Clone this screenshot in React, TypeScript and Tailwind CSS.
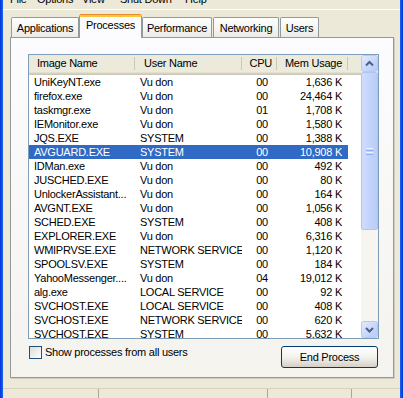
const rows: [string, string, string, string][] = [
  ["UniKeyNT.exe", "Vu don", "00", "1,636 K"],
  ["firefox.exe", "Vu don", "00", "24,464 K"],
  ["taskmgr.exe", "Vu don", "01", "1,708 K"],
  ["IEMonitor.exe", "Vu don", "00", "1,580 K"],
  ["JQS.EXE", "SYSTEM", "00", "1,388 K"],
  ["AVGUARD.EXE", "SYSTEM", "00", "10,908 K"],
  ["IDMan.exe", "Vu don", "00", "492 K"],
  ["JUSCHED.EXE", "Vu don", "00", "80 K"],
  ["UnlockerAssistant...", "Vu don", "00", "164 K"],
  ["AVGNT.EXE", "Vu don", "00", "1,056 K"],
  ["SCHED.EXE", "SYSTEM", "00", "408 K"],
  ["EXPLORER.EXE", "Vu don", "00", "6,316 K"],
  ["WMIPRVSE.EXE", "NETWORK SERVICE", "00", "1,120 K"],
  ["SPOOLSV.EXE", "SYSTEM", "00", "184 K"],
  ["YahooMessenger....", "Vu don", "04", "19,012 K"],
  ["alg.exe", "LOCAL SERVICE", "00", "92 K"],
  ["SVCHOST.EXE", "LOCAL SERVICE", "00", "408 K"],
  ["SVCHOST.EXE", "NETWORK SERVICE", "00", "620 K"],
  ["SVCHOST.EXE", "SYSTEM", "00", "5,632 K"],
];

const selectedRow = 5;

const menu = [
  { label: "File", w: "w-[27px]" },
  { label: "Options", w: "w-[45px]" },
  { label: "View", w: "w-[38px]" },
  { label: "Shut Down", w: "w-[65px]" },
  { label: "Help", w: "w-[40px]" },
];

function Sep() {
  return <div className="h-[13px] w-px shrink-0 self-center bg-[#CBC7B8]" />;
}

function ScrollButton({ up }: { up?: boolean }) {
  return (
    <svg width="17" height="17" viewBox="0 0 17 17" className="block">
      <defs>
        <linearGradient id={up ? "sbu" : "sbd"} x1="0" y1="0" x2="1" y2="1">
          <stop offset="0" stopColor="#E3EBFE" />
          <stop offset="1" stopColor="#B4C8F6" />
        </linearGradient>
      </defs>
      <rect x="0.5" y="0.5" width="16" height="16" rx="2" fill={`url(#${up ? "sbu" : "sbd"})`} stroke="#B8C9F1" />
      <polyline
        points={up ? "5,10.5 8.5,7 12,10.5" : "5,7 8.5,10.5 12,7"}
        fill="none"
        stroke="#4D6185"
        strokeWidth="2"
      />
    </svg>
  );
}

function Tab({ label, w, selected }: { label: string; w: string; selected?: boolean }) {
  if (selected) {
    return (
      <div className={`relative z-10 -mb-px flex h-[24px] ${w} flex-col rounded-t-[3px] border-x border-[#919B9C] bg-[#FCFCFE]`}>
        <div className="h-px rounded-t-[3px] bg-[#E68B2C]" />
        <div className="h-[2px] bg-[#FFC73C]" />
        <div className="flex flex-1 items-start justify-center pt-[2px]">{label}</div>
      </div>
    );
  }
  return (
    <div
      className={`flex h-[20px] ${w} items-center justify-center rounded-t-[2px] border-x border-t border-[#919B9C] bg-gradient-to-b from-[#FFFFFF] to-[#ECEBE6] pt-px`}
    >
      {label}
    </div>
  );
}

export default function App() {
  return (
    <div className="flex h-[398px] w-[403px] overflow-hidden bg-[#ECE9D8] font-['Liberation_Sans',Arial,sans-serif] text-[11px] leading-[13px] tracking-[-0.25px] text-black">
      <div className="w-[3px] shrink-0 bg-gradient-to-r from-[#0831D9] to-[#1C65EB]" />

      <div className="flex w-[397px] flex-col">
        {/* menu bar, scrolled off the top */}
        <div className="h-[10px] shrink-0 border-b border-white pl-[7px]">
          <div className="-mt-[7px] flex">
            {menu.map((m) => (
              <span key={m.label} className={`${m.w} shrink-0`}>
                {m.label}
              </span>
            ))}
          </div>
        </div>

        {/* tabs */}
        <div className="mt-[4px] flex h-[23px] items-end pl-[8px]">
          <Tab label="Applications" w="w-[68px]" />
          <Tab label="Processes" w="w-[63px]" selected />
          <Tab label="Performance" w="w-[70px]" />
          <div className="w-px" />
          <Tab label="Networking" w="w-[66px]" />
          <div className="w-px" />
          <Tab label="Users" w="w-[39px]" />
        </div>

        {/* tab page */}
        <div className="ml-[7px] h-[345px] w-[384px] border border-[#919B9C] bg-gradient-to-b from-[#FCFCFE] to-[#F4F3EE] shadow-[1px_1px_0_#D0CEBF]">
          <div className="ml-[17px] mt-[16px] w-[351px]">
            <div className="flex h-[285px] border border-[#7F9DB9] bg-white">
              <div className="w-[332px] overflow-hidden">
                <div className="flex h-[20px] bg-[linear-gradient(to_bottom,#EBEADB_0,#EBEADB_17px,#E2DECD_17px,#E2DECD_18px,#D6D2C2_18px,#D6D2C2_19px,#CBC7B8_19px)] pb-[3px]">
                  <div className="flex w-[106px] shrink-0">
                    <div className="flex-1 pl-[8px] self-center">Image Name</div>
                    <Sep />
                  </div>
                  <div className="flex w-[107px] shrink-0">
                    <div className="flex-1 pl-[9px] self-center">User Name</div>
                    <Sep />
                  </div>
                  <div className="flex w-[35px] shrink-0">
                    <div className="flex-1 pr-[4px] text-right self-center">CPU</div>
                    <Sep />
                  </div>
                  <div className="flex w-[71px] shrink-0">
                    <div className="flex-1 pr-[5px] text-right self-center">Mem Usage</div>
                    <Sep />
                  </div>
                </div>
                {rows.map((r, i) => (
                  <div
                    key={i}
                    className={`flex h-[14px] w-[319px] items-center whitespace-nowrap ${
                      i === selectedRow ? "bg-[#316AC5] text-white" : ""
                    }`}
                  >
                    <div className="w-[106px] shrink-0 overflow-hidden pl-[5px]">{r[0]}</div>
                    <div className="w-[107px] shrink-0 overflow-hidden pl-[5px]">{r[1]}</div>
                    <div className="w-[35px] shrink-0 pr-[9px] text-right">{r[2]}</div>
                    <div className="w-[71px] shrink-0 pr-[6px] text-right">{r[3]}</div>
                  </div>
                ))}
              </div>

              {/* vertical scrollbar */}
              <div className="flex w-[17px] shrink-0 flex-col bg-[#F6F5F0]">
                <ScrollButton up />
                <div className="flex h-[158px] flex-col items-center justify-center gap-[1px] rounded-[2px] border border-[#B1C5F4] bg-gradient-to-r from-[#CFDCFD] to-[#B9CCF8]">
                  <div className="h-px w-[7px] bg-[#EEF3FE]" />
                  <div className="h-px w-[7px] bg-[#8CB0F8]" />
                  <div className="h-px w-[7px] bg-[#EEF3FE]" />
                  <div className="h-px w-[7px] bg-[#8CB0F8]" />
                </div>
                <div className="flex-1" />
                <ScrollButton />
              </div>
            </div>

            <div className="mt-[7px] flex items-start justify-between">
              <div className="ml-px flex items-center gap-[3px]">
                <div className="h-[13px] w-[13px] border border-[#1C5180] bg-gradient-to-br from-[#DCDCD7] to-[#FFFFFF]" />
                <span>Show processes from all users</span>
              </div>
              <div className="mr-px flex h-[22px] w-[97px] items-center justify-center rounded-[3px] border border-[#003C74] bg-gradient-to-b from-[#FFFFFF] via-[#F4F3EE] to-[#D6D0C5]">
                End Process
              </div>
            </div>
          </div>
        </div>

        {/* status bar, cut off below */}
        <div className="mt-[10px] flex h-[10px] border-t border-[#D8D2BD]">
          <div className="w-[96px] border-r border-[#ACA899]" />
          <div className="w-[169px] border-r border-[#ACA899]" />
          <div className="w-[84px] border-r border-[#ACA899]" />
        </div>
      </div>

      <div className="w-[3px] shrink-0 bg-gradient-to-r from-[#1C65EB] to-[#0831D9]" />
    </div>
  );
}
